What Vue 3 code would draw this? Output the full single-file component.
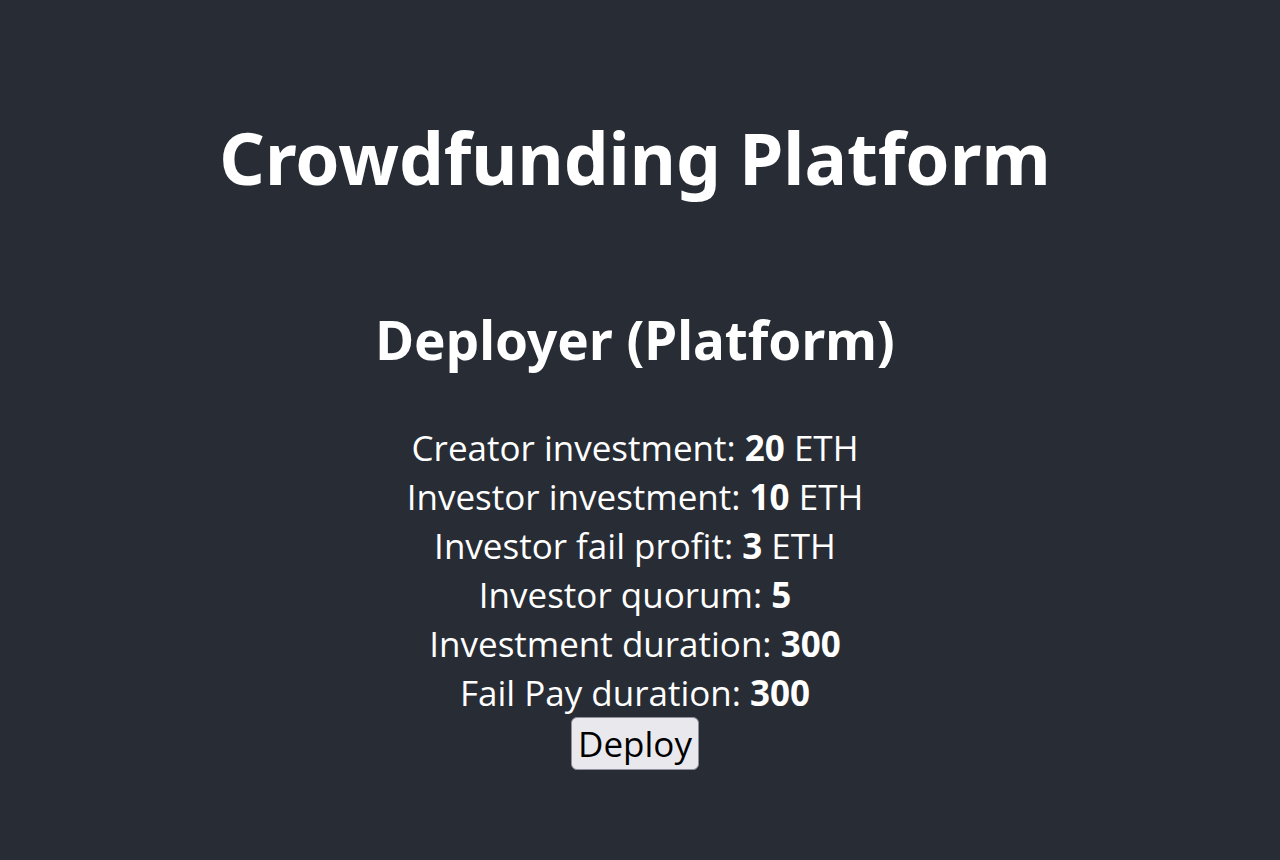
<script setup>
const parameters = [
  { label: 'Creator investment', value: 20, unit: ' ETH' },
  { label: 'Investor investment', value: 10, unit: ' ETH' },
  { label: 'Investor fail profit', value: 3, unit: ' ETH' },
  { label: 'Investor quorum', value: 5, unit: '' },
  { label: 'Investment duration', value: 300, unit: '' },
  { label: 'Fail Pay duration', value: 300, unit: '' },
]
</script>

<template>
  <main class="platform">
    <h1>Crowdfunding Platform</h1>
    <h2>Deployer (Platform)</h2>
    <div v-for="item in parameters" :key="item.label" class="parameter">
      {{ item.label }}: <strong>{{ item.value }}</strong>{{ item.unit }}
    </div>
    <button type="button">Deploy</button>
  </main>
</template>

<style>
body {
  margin: 0;
  background: #282c34;
}
</style>

<style scoped>
.platform {
  display: flex;
  flex-direction: column;
  align-items: center;
  justify-content: center;
  box-sizing: border-box;
  min-height: 100vh;
  padding: 18px 10px 0 0;
  color: #fff;
  background: #282c34;
  font-family: "Open Sans", "Noto Sans", sans-serif;
  font-size: 35px;
  text-align: center;
}
h1,
h2 {
  font-family: "Noto Sans", "Open Sans", sans-serif;
}
h1 {
  margin: 0 0 96px;
  font-size: 71px;
  line-height: 98px;
}
h2 {
  margin: 0 0 46px;
  font-size: 53px;
  line-height: 74px;
}
.parameter {
  line-height: 49px;
}
button {
  box-sizing: border-box;
  padding: 0 6px;
  border: 1px solid #8f8f9d;
  border-radius: 6px;
  color: #000;
  background: #e9e9ed;
  font-family: inherit;
  font-size: 35px;
  line-height: 51px;
}
</style>
